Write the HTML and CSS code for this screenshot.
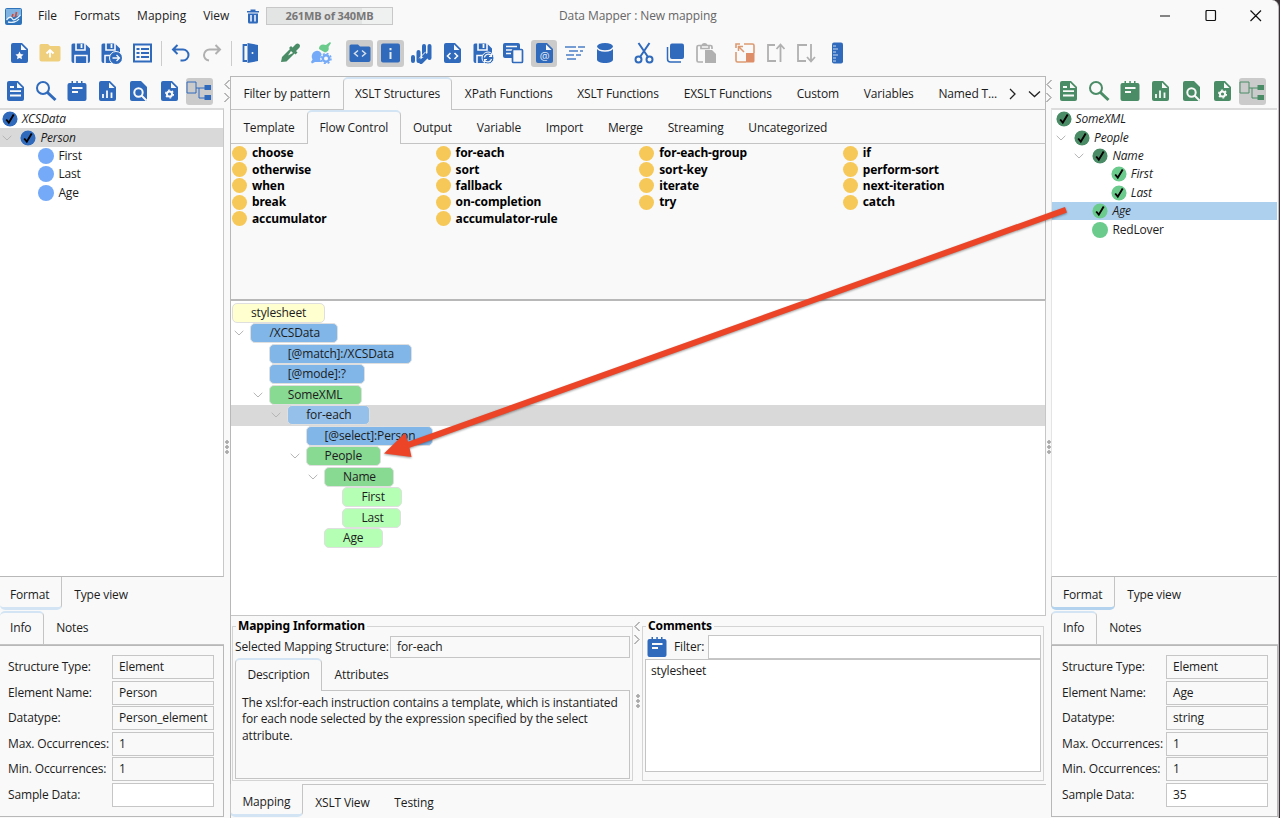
FILE: index.html
```html
<!DOCTYPE html>
<html lang="en">
<head>
    <meta charset="UTF-8">
    <meta name="viewport" content="width=device-width, initial-scale=1.0">
    <title>Data Mapper : New mapping</title>
    <link rel="stylesheet" href="styles.css">
</head>
<body>
    <!-- shared icon shapes, 22x22 grid -->
    <svg class="defs">
        <symbol id="doc" viewBox="0 0 22 22"><path d="M5 1h9l6 6v12a2 2 0 0 1-2 2H5a2 2 0 0 1-2-2V3a2 2 0 0 1 2-2z"/><path d="M13 2.5V8h5.5" fill="#f9f9f9"/></symbol>
        <symbol id="i-text" viewBox="0 0 22 22"><use href="#doc"/><path d="M6 7h4M6 11.2h11M6 15.5h11" stroke="#f9f9f9" stroke-width="1.8"/></symbol>
        <symbol id="i-search" viewBox="0 0 22 22"><circle cx="8" cy="8" r="6" fill="none" stroke="currentColor" stroke-width="2"/><path d="M12.5 12.5l8 7.5" stroke="currentColor" stroke-width="3"/></symbol>
        <symbol id="i-note" viewBox="0 0 22 22"><path d="M3.500 3H5.500V1h1.500v2h3.300V1h1.500v2H15V1h1.500v2h2a2 2 0 0 1 2 2v14a2 2 0 0 1-2 2h-15a2 2 0 0 1-2-2V5a2 2 0 0 1 2-2z"/><path d="M6 8h10.500M6 12h6" stroke="#f9f9f9" stroke-width="1.8"/></symbol>
        <symbol id="i-chart" viewBox="0 0 22 22"><use href="#doc"/><path d="M7 18v-4M11 18V10.500M15.500 18v-5.500" stroke="#f9f9f9" stroke-width="1.8"/></symbol>
        <symbol id="i-find" viewBox="0 0 22 22"><path d="M5 1h9l6 6v12a2 2 0 0 1-2 2H5a2 2 0 0 1-2-2V3a2 2 0 0 1 2-2z"/><circle cx="11.500" cy="12.500" r="4.200" fill="none" stroke="#f9f9f9" stroke-width="2"/><path d="M14.500 15.500l5 5" stroke="#f9f9f9" stroke-width="2"/></symbol>
        <symbol id="i-gear" viewBox="0 0 22 22"><use href="#doc"/><circle cx="11.500" cy="14" r="2.600" fill="none" stroke="#f9f9f9" stroke-width="2"/><circle cx="11.500" cy="14" r="3.900" fill="none" stroke="#f9f9f9" stroke-width="1.300" stroke-dasharray="2 2.080"/></symbol>
        <symbol id="i-tree" viewBox="0 0 26 22"><path d="M1 2h9v11H1zM10 8h9M13 8v10h6" fill="none" stroke="currentColor" stroke-width="1"/><path class="tree-a" d="M18.500 5h6.500v5h-6.500z"/><path class="tree-b" d="M18.500 15h6.500v5h-6.500z"/></symbol>
        <symbol id="i-save" viewBox="0 0 22 22"><path d="M3 1.500h12l5 5V19a2 2 0 0 1-2 2H3.500a2 2 0 0 1-2-2V3a1.500 1.500 0 0 1 1.500-1.500z"/><path d="M6 1v7h9V1M5 21v-7.500h12V21" fill="none" stroke="#f9f9f9" stroke-width="1.600"/><path d="M11.500 2v4" stroke="#f9f9f9" stroke-width="1.800"/></symbol>
        <symbol id="i-check" viewBox="0 0 16 16"><circle cx="8" cy="8" r="7.600"/><path d="M4.200 8.500l2.600 3.200L11.700 3.500" fill="none" stroke="#000" stroke-width="1.900"/></symbol>
        <symbol id="i-down" viewBox="0 0 10 6"><path d="M.7.8L5 5 9.300.8" fill="none" stroke="#b5b5b5"/></symbol>
    </svg>

    <div class="window">
        <header class="titlebar">
            <svg class="logo" viewBox="0 0 17 17"><rect width="17" height="17" rx="2" fill="#2f74bb"/><path d="M1 1h15v6L1 11z" fill="#7fb4e2"/><path d="M1.500 12c3-4 5-3 6-1s4 0 8-4M3 14c4 1 9 0 11-3" fill="none" stroke="#e4f1fb" stroke-width="1.300"/><path d="M11.500 4l-1 5M8 6l-1 3" stroke="#d64532" stroke-width="1.600"/></svg>
            <nav class="menu">
                <a>File</a>
                <a>Formats</a>
                <a>Mapping</a>
                <a>View</a>
            </nav>
            <svg class="trash" viewBox="0 0 12 15"><path d="M0 2h3.500V.5h5V2H12v1.500H0zM1 4.500h10V13a1.500 1.500 0 0 1-1.500 1.500h-7A1.500 1.500 0 0 1 1 13z"/><path d="M4 6v6.500M8 6v6.500" stroke="#f9f9f9" stroke-width="1.500"/></svg>
            <div class="memory">261MB of 340MB</div>
            <div class="title">Data Mapper : New mapping</div>
            <svg class="controls" viewBox="0 0 104 12"><path d="M0 6h10M46 1.500a1 1 0 0 1 1-1h7.500a1 1 0 0 1 1 1v8a1 1 0 0 1-1 1H47a1 1 0 0 1-1-1zM90.500.5l10.500 10.500M101 .5L90.500 11" fill="none" stroke="#111" stroke-width="1.200"/></svg>
        </header>

        <div class="toolbar">
            <i><svg viewBox="0 0 22 22"><use href="#doc"/><path d="M11.500 9.500l1.200 2.500 2.800.4-2 2 .5 2.800-2.500-1.300L9 17.200l.5-2.800-2-2 2.800-.4z" fill="#f9f9f9"/></svg></i>
            <i><svg viewBox="0 0 22 22" fill="#f0cf7c"><path d="M2 2h7l2 2h9a1.500 1.500 0 0 1 1.500 1.500v12A2 2 0 0 1 19.500 19.500h-17A2 2 0 0 1 .5 17.500v-14A1.500 1.500 0 0 1 2 2z"/><path d="M11 15.500V8.500M7.500 11.500L11 8l3.500 3.500" fill="none" stroke="#fff" stroke-width="1.800"/></svg></i>
            <i><svg><use href="#i-save"/></svg></i>
            <i><svg viewBox="0 0 22 22"><use href="#i-save"/><circle cx="16" cy="16" r="6.500" stroke="#f9f9f9"/><path d="M12.500 16h6.500M16.500 13l3 3-3 3" fill="none" stroke="#f9f9f9" stroke-width="1.300"/></svg></i>
            <i><svg viewBox="0 0 22 22"><path d="M3 2.500h17v17H3z" fill="none" stroke="currentColor" stroke-width="2"/><path d="M5.500 7h3M5.500 11h3M5.500 15h3M10 7h8M10 11h8M10 15h8" stroke="currentColor" stroke-width="2.200"/></svg></i>
            <b class="line"></b>
            <i><svg viewBox="0 0 22 22" fill="none" stroke="currentColor" stroke-width="2"><path d="M7.500 3L3 7.500 7.500 12M3 7.500h10a5.500 5.500 0 0 1 0 11h-2.500"/></svg></i>
            <i class="grey"><svg viewBox="0 0 22 22" fill="none" stroke="currentColor" stroke-width="2"><path d="M14.500 3L19 7.500 14.500 12M19 7.500H9a5.500 5.500 0 0 0-6 5.500c0 3 2 5 5 5.500"/></svg></i>
            <b class="line"></b>
            <i><svg viewBox="0 0 22 22"><path d="M7.500 1l10.500 2v16L7.500 21z"/><path d="M7 3H3.500v16H7" fill="none" stroke="currentColor" stroke-width="1.800"/><circle cx="12.500" cy="11" r="1" fill="#f9f9f9"/></svg></i>
            <b></b>
            <i class="green"><svg viewBox="0 0 22 22"><path d="M2 20l1-5 8-8-1-1 2-2 1.500 1.500L17 2a2.500 2.500 0 0 1 3.500 3.500L17 9l1.500 1.500-2 2-1-1-8 8z"/><path d="M12 9l2 2-5 2.500z" fill="#f9f9f9"/></svg></i>
            <i><svg viewBox="0 0 22 22"><path d="M2.500 11.500C5 8 9 8 11 11l3 6-2 3H5l-3 1.500L1 20l1.500-2.500c-1-2-1-4 0-6z" fill="#74aaf7"/><path d="M9 7c0-4 3-5.500 7-4l4-3 1 1-2.500 4c1 3-1 5-3.500 5.500z" fill="#6bcb8d"/><circle cx="16" cy="16.500" r="5.800" fill="#f9f9f9"/><circle cx="16" cy="16.500" r="3.200" fill="#f9f9f9" stroke="#74aaf7" stroke-width="2.400"/><circle cx="16" cy="16.500" r="5" fill="none" stroke="#74aaf7" stroke-width="1.500" stroke-dasharray="2 1.927"/></svg></i>
            <b></b>
            <i class="on"><svg viewBox="0 0 22 22"><path d="M2 2.500h7l2 2h9A1.500 1.500 0 0 1 21.500 6v12a2 2 0 0 1-2 2h-17a2 2 0 0 1-2-2V4A1.500 1.500 0 0 1 2 2.500z"/><path d="M9 8.500l-3.500 3L9 14.500M13 8.500l3.500 3-3.500 3" fill="none" stroke="#d8dfe9" stroke-width="1.500"/></svg></i>
            <i class="on"><svg viewBox="0 0 22 22"><rect x="2" y="1.500" width="19" height="19" rx="2"/><path d="M11.500 6v2.200M11.500 10v7" stroke="#e7ebf1" stroke-width="2"/></svg></i>
            <i><svg viewBox="0 0 22 22" fill="none" stroke="currentColor" stroke-width="4" stroke-linecap="round"><path d="M3 19v-4M8.500 19V10M14 14V4M19.500 16V4M11 20l7-7"/><path d="M10.500 16.500l6-6" stroke="#f9f9f9" stroke-width="1" transform="translate(-1 -.5)"/></svg></i>
            <i><svg viewBox="0 0 22 22"><use href="#doc"/><path d="M9.500 11L6.500 14l3 3M13.500 11l3 3-3 3" fill="none" stroke="#f9f9f9" stroke-width="1.600"/></svg></i>
            <i><svg viewBox="0 0 22 22"><use href="#i-save"/><circle cx="16" cy="16" r="6" stroke="#f9f9f9"/><path d="M12.500 15.500a3.800 3.800 0 0 1 7-1.500M19.500 12v2.500H17M19.500 17a3.800 3.800 0 0 1-7 1M12.500 20v-2.500H15" fill="none" stroke="#f9f9f9" stroke-width="1.200"/></svg></i>
            <i><svg viewBox="0 0 22 22"><rect x="1" y="1" width="17" height="15" rx="2"/><path d="M4 4.500h11M4 8h11M4 11.500h5" stroke="#f9f9f9" stroke-width="1.300"/><rect x="10.500" y="7.500" width="10" height="13" rx="1" fill="#f9f9f9" stroke="currentColor" stroke-width="1.700"/></svg></i>
            <i class="on"><svg viewBox="0 0 22 22"><use href="#doc"/><text x="11.500" y="17.500" class="at">@</text></svg></i>
            <i><svg viewBox="0 0 22 22" fill="none" stroke="#4a7fc6" stroke-width="1.400"><path d="M1 5h11M14 5h7M5 9h9M16 9h3M2 13h8M12 13h5M3 17h9"/></svg></i>
            <i><svg viewBox="0 0 22 22"><path d="M3 5v12.500c0 2 3.500 3.500 8 3.500s8-1.500 8-3.500V5z"/><ellipse cx="11" cy="4.500" rx="8" ry="3.500"/><path d="M3 5.500c1 2.800 4 3.500 8 3.500s7-.7 8-3.500" fill="none" stroke="#f9f9f9" stroke-width="1.300"/></svg></i>
            <b></b>
            <i><svg viewBox="0 0 22 22" fill="none" stroke="currentColor" stroke-width="2"><circle cx="5.500" cy="17.500" r="3"/><circle cx="16.500" cy="17.500" r="3"/><path d="M5.500 1l9.500 14M16.500 1L7 15"/></svg></i>
            <i><svg viewBox="0 0 22 22"><rect x="6" y="1.500" width="14" height="15.500" rx="2"/><path d="M3.500 5v12a3 3 0 0 0 3 3H17" fill="none" stroke="currentColor" stroke-width="1.500"/></svg></i>
            <i class="grey"><svg viewBox="0 0 22 22"><path d="M8 20H3.500A1.500 1.500 0 0 1 2 18.500V5a1.500 1.500 0 0 1 1.500-1.500h12A1.500 1.500 0 0 1 17 5v2M6 3.500v3h8v-3" fill="none" stroke="currentColor" stroke-width="1.700"/><path d="M6.500 4a3 3 0 0 1 6 0" /><path d="M10 8h7l4 4v9H10z"/></svg></i>
            <b></b>
            <i class="orange"><svg viewBox="0 0 22 22"><path d="M10 2H18.500A1.500 1.500 0 0 1 20 3.500V11M2 10v8.500A1.500 1.500 0 0 0 3.500 20H12M2 6V2h4" fill="none" stroke="currentColor" stroke-width="1.600"/><path d="M12 11h8.500v8a1.500 1.500 0 0 1-1.500 1.500h-7z" fill="#de8f69"/><path d="M10 10L4.500 4.500M4.500 9v-4.500h4.500" fill="none" stroke="currentColor" stroke-width="1.500"/></svg></i>
            <i class="grey"><svg viewBox="0 0 22 22" fill="none" stroke="currentColor" stroke-width="1.800"><path d="M10 3H3v16h8M15.500 20V3M11.500 7l4-4.500 4 4.500"/></svg></i>
            <i class="grey"><svg viewBox="0 0 22 22" fill="none" stroke="currentColor" stroke-width="1.800"><path d="M12 3H3v16h8M16 2v17M12 15l4 4.500 4-4.500"/></svg></i>
            <i><svg viewBox="0 0 22 22"><rect x="6" y="0.500" width="11" height="21" rx="2"/><path d="M7 4h3M7 7h5M7 10h3M7 13h5M7 16h3M7 19h3" stroke="#c9daf0" stroke-width="1.200"/></svg></i>
        </div>

        <main class="main">
            <aside class="side">
                <div class="sidebar-tools">
                    <i><svg><use href="#i-text"/></svg></i>
                    <i><svg><use href="#i-search"/></svg></i>
                    <i><svg><use href="#i-note"/></svg></i>
                    <i><svg><use href="#i-chart"/></svg></i>
                    <i><svg><use href="#i-find"/></svg></i>
                    <i><svg><use href="#i-gear"/></svg></i>
                    <i class="on tree-icon"><svg><use href="#i-tree"/></svg></i>
                </div>
                <ul class="tree">
                    <li class="l0 mapped"><svg class="dot"><use href="#i-check"/></svg>XCSData</li>
                    <li class="l1 mapped current"><svg class="exp"><use href="#i-down"/></svg><svg class="dot"><use href="#i-check"/></svg>Person</li>
                    <li class="l2"><span class="dot light"></span>First</li>
                    <li class="l2"><span class="dot light"></span>Last</li>
                    <li class="l2"><span class="dot light"></span>Age</li>
                </ul>
                <div class="tabs bottom"><span class="tab active">Format</span><span class="tab">Type view</span></div>
                <div class="tabs info-tabs"><span class="tab active">Info</span><span class="tab">Notes</span></div>
                <div class="info">
                    <label>Structure Type:</label><div class="field">Element</div>
                    <label>Element Name:</label><div class="field">Person</div>
                    <label>Datatype:</label><div class="field">Person_element</div>
                    <label>Max. Occurrences:</label><div class="field">1</div>
                    <label>Min. Occurrences:</label><div class="field">1</div>
                    <label>Sample Data:</label><div class="field white"></div>
                </div>
            </aside>

            <div class="splitter">
                <svg class="arrows" viewBox="0 0 6 24"><path d="M5.500 1L1 5.500 5.500 10M.5 14L5 18.500.5 23" fill="none" stroke="#777"/></svg>
                <span class="grip"></span>
            </div>

            <section class="center">
                <div class="tabs functions">
                    <span class="tab">Filter by pattern</span>
                    <span class="tab active">XSLT Structures</span>
                    <span class="tab">XPath Functions</span>
                    <span class="tab">XSLT Functions</span>
                    <span class="tab">EXSLT Functions</span>
                    <span class="tab">Custom</span>
                    <span class="tab">Variables</span>
                    <span class="tab">Named T...</span>
                    <svg class="more" viewBox="0 0 32 12"><path d="M1 1l5 5-5 5M20 3.500l5.500 5 5.500-5" fill="none" stroke="#222" stroke-width="1.300"/></svg>
                </div>
                <div class="tabs structures">
                    <span class="tab">Template</span>
                    <span class="tab active">Flow Control</span>
                    <span class="tab">Output</span>
                    <span class="tab">Variable</span>
                    <span class="tab">Import</span>
                    <span class="tab">Merge</span>
                    <span class="tab">Streaming</span>
                    <span class="tab">Uncategorized</span>
                </div>
                <div class="palette">
                    <span>choose</span><span>for-each</span><span>for-each-group</span><span>if</span>
                    <span>otherwise</span><span>sort</span><span>sort-key</span><span>perform-sort</span>
                    <span>when</span><span>fallback</span><span>iterate</span><span>next-iteration</span>
                    <span>break</span><span>on-completion</span><span>try</span><span>catch</span>
                    <span>accumulator</span><span>accumulator-rule</span>
                </div>
                <ul class="mapping">
                    <li class="l0"><span class="node yellow w92">stylesheet</span></li>
                    <li class="l1"><svg class="exp"><use href="#i-down"/></svg><span class="node blue w88">/XCSData</span></li>
                    <li class="l2"><span class="node blue w143">[@match]:/XCSData</span></li>
                    <li class="l2"><span class="node blue w96">[@mode]:?</span></li>
                    <li class="l2"><svg class="exp"><use href="#i-down"/></svg><span class="node dark w92">SomeXML</span></li>
                    <li class="l3 current"><svg class="exp"><use href="#i-down"/></svg><span class="node blue w82">for-each</span></li>
                    <li class="l4"><span class="node blue w127">[@select]:Person</span></li>
                    <li class="l4"><svg class="exp"><use href="#i-down"/></svg><span class="node dark w75">People</span></li>
                    <li class="l5"><svg class="exp"><use href="#i-down"/></svg><span class="node dark w70">Name</span></li>
                    <li class="l6"><span class="node pale w60">First</span></li>
                    <li class="l6"><span class="node pale w59">Last</span></li>
                    <li class="l5"><span class="node pale w59">Age</span></li>
                </ul>
                <div class="details">
                    <div class="group">
                        <div class="legend">Mapping Information</div>
                        <div class="selected"><span>Selected Mapping Structure:</span><div class="field">for-each</div></div>
                        <div class="tabs desc-tabs"><span class="tab active">Description</span><span class="tab">Attributes</span></div>
                        <p class="description">The xsl:for-each instruction contains a template, which is instantiated<br>for each node selected by the expression specified by the select<br>attribute.</p>
                    </div>
                    <div class="splitter small">
                        <svg class="arrows" viewBox="0 0 6 24"><path d="M5.500 1L1 5.500 5.500 10M.5 14L5 18.500.5 23" fill="none" stroke="#777"/></svg>
                        <span class="grip"></span>
                    </div>
                    <div class="group comments">
                        <div class="legend">Comments</div>
                        <div class="filter"><svg><use href="#i-note"/></svg><span>Filter:</span><div class="field white"></div></div>
                        <div class="comment-list">stylesheet</div>
                    </div>
                </div>
                <div class="tabs bottom views"><span class="tab active">Mapping</span><span class="tab">XSLT View</span><span class="tab">Testing</span></div>
            </section>

            <div class="splitter">
                <svg class="arrows" viewBox="0 0 6 24"><path d="M5.500 1L1 5.500 5.500 10M.5 14L5 18.500.5 23" fill="none" stroke="#777"/></svg>
                <span class="grip"></span>
            </div>

            <aside class="side target">
                <div class="sidebar-tools">
                    <i><svg><use href="#i-text"/></svg></i>
                    <i><svg><use href="#i-search"/></svg></i>
                    <i><svg><use href="#i-note"/></svg></i>
                    <i><svg><use href="#i-chart"/></svg></i>
                    <i><svg><use href="#i-find"/></svg></i>
                    <i><svg><use href="#i-gear"/></svg></i>
                    <i class="on tree-icon"><svg><use href="#i-tree"/></svg></i>
                </div>
                <ul class="tree">
                    <li class="l0 mapped"><svg class="dot"><use href="#i-check"/></svg>SomeXML</li>
                    <li class="l1 mapped"><svg class="exp"><use href="#i-down"/></svg><svg class="dot"><use href="#i-check"/></svg>People</li>
                    <li class="l2 mapped"><svg class="exp"><use href="#i-down"/></svg><svg class="dot"><use href="#i-check"/></svg>Name</li>
                    <li class="l3 mapped"><svg class="dot leaf"><use href="#i-check"/></svg>First</li>
                    <li class="l3 mapped"><svg class="dot leaf"><use href="#i-check"/></svg>Last</li>
                    <li class="l2 mapped current"><svg class="dot leaf"><use href="#i-check"/></svg>Age</li>
                    <li class="l2"><span class="dot light"></span>RedLover</li>
                </ul>
                <div class="tabs bottom"><span class="tab active">Format</span><span class="tab">Type view</span></div>
                <div class="tabs info-tabs"><span class="tab active">Info</span><span class="tab">Notes</span></div>
                <div class="info">
                    <label>Structure Type:</label><div class="field">Element</div>
                    <label>Element Name:</label><div class="field">Age</div>
                    <label>Datatype:</label><div class="field">string</div>
                    <label>Max. Occurrences:</label><div class="field">1</div>
                    <label>Min. Occurrences:</label><div class="field">1</div>
                    <label>Sample Data:</label><div class="field white">35</div>
                </div>
            </aside>
        </main>
    </div>

    <!-- drag arrow from Age to People -->
    <svg class="drag" viewBox="0 0 1280 818">
        <path d="M1065 207L1067 212.500 409.500 447.800 411.500 457 384 453.500 405 433 408 441.800z" fill="#eb4427"/>
    </svg>
</body>
</html>
```

FILE: styles.css
```css
* {
    box-sizing: border-box;
}
body {
    margin: 0;
    background: #3a3136;
    font-family: "Open Sans", "Noto Sans", sans-serif;
    font-size: 12px;
    line-height: 16px;
    letter-spacing: -0.15px;
    color: #1c1c1c;
    fill: currentColor;
    overflow: hidden;
}
ul, p {
    margin: 0;
    padding: 0;
    list-style: none;
}
svg {
    display: block;
    flex: none;
}
.defs {
    position: absolute;
    width: 0;
    height: 0;
}
.window {
    width: 1279px;
    height: 818px;
    background: #f9f9f9;
    border-right: 1px solid #bbb;
    border-radius: 0 7px 0 0;
    display: flex;
    flex-direction: column;
}

/* title bar */
.titlebar {
    height: 32px;
    display: flex;
    align-items: center;
    padding-left: 5px;
    flex: none;
}
.logo {
    width: 17px;
    height: 17px;
}
.menu {
    display: flex;
    gap: 17px;
    margin-left: 16px;
    width: 208px;
    letter-spacing: 0;
}
.trash {
    width: 12px;
    height: 15px;
    color: #2f6abc;
    margin-left: 1px;
}
.memory {
    width: 127px;
    height: 18px;
    margin-left: 7px;
    border: 1px solid #c8c8c8;
    background: linear-gradient(90deg, #e3e4e4 76%, #eff0f0 76%);
    color: #777;
    font-weight: bold;
    font-size: 11px;
    text-align: center;
}
.title {
    margin-left: 166px;
    width: 160px;
    color: #666;
    white-space: nowrap;
    letter-spacing: -0.1px;
}
.controls {
    width: 104px;
    height: 12px;
    margin-left: 441px;
}

/* toolbars */
.toolbar, .sidebar-tools {
    display: flex;
    align-items: center;
    color: #2f6abc;
    flex: none;
}
.toolbar {
    height: 42px;
    padding-left: 4px;
    margin-bottom: 2px;
}
.toolbar i, .sidebar-tools i {
    width: 26.700px;
    height: 27px;
    margin: 0 2px;
    display: flex;
    align-items: center;
    justify-content: center;
    flex: none;
}
.toolbar svg, .sidebar-tools svg, .filter svg {
    width: 22px;
    height: 22px;
}
.toolbar b {
    width: 8.400px;
    height: 25px;
}
.toolbar b.line {
    background: linear-gradient(#ccc, #ccc) 4px 0 / 1px 100% no-repeat;
}
.toolbar .on, .sidebar-tools .on {
    background: #cbcbcb;
    border-radius: 3px;
}
.toolbar .grey {
    color: #b0b0b0;
}
.toolbar .green {
    color: #4a8c66;
}
.toolbar .orange {
    color: #dc9a72;
}
.at {
    font-size: 11px;
    font-style: normal;
    text-anchor: middle;
    fill: #e3eaf4;
}
.sidebar-tools {
    height: 30px;
    margin-bottom: 2px;
}
.sidebar-tools .tree-icon svg {
    width: 26px;
}

/* three columns */
.main {
    flex: 1;
    display: grid;
    grid-template-columns: 224px 6px 816px 5px 227px;
    min-height: 0;
}
.side {
    display: flex;
    flex-direction: column;
    min-width: 0;
}
.target .sidebar-tools {
    color: #4a8c66;
    padding-left: 2px;
}
.tree-b {
    fill: currentColor;
}
.target .tree-a {
    fill: #2f6abc;
}
.tree {
    height: 469px;
    background: #fff;
    border-top: 2px solid #dcdcdc;
    border-right: 1px solid #c8c8c8;
    border-bottom: 1px solid #b8b8b8;
}
.target .tree {
    border-left: 1px solid #e4e4e4;
    border-right: 0;
    margin-right: 1px;
}
.tree li {
    height: 18.400px;
    display: flex;
    align-items: center;
    position: relative;
}
.tree .l0 { padding-left: 2px; }
.tree .l1 { padding-left: 20.400px; }
.tree .l2 { padding-left: 38.400px; }
.tree .l3 { padding-left: 57.200px; }
.target .tree .l0 { padding-left: 3.500px; }
.target .tree .l1 { padding-left: 22px; }
.target .tree .l2 { padding-left: 40.400px; }
.target .tree .l3 { padding-left: 58.800px; }
.mapped {
    font-style: italic;
}
.dot {
    width: 16px;
    height: 16px;
    margin-right: 4px;
    color: #2f6abc;
    border-radius: 50%;
}
.dot.light {
    background: #74aaf7;
}
.target .dot {
    color: #4a8c66;
}
.target .dot.leaf {
    color: #6bcb8d;
}
.target .dot.light {
    background: #6bcb8d;
}
.exp {
    width: 10px;
    height: 6px;
    margin-left: -18px;
    margin-right: 8px;
}
.tree .current {
    background: #d9d9d9;
}
.target .tree .current {
    background: #aed0ef;
}

/* tabs */
.tabs {
    display: flex;
    height: 33px;
    flex: none;
    border-bottom: 1px solid #c4c4c4;
}
.tab {
    padding: 0 12.400px;
    line-height: 33px;
    white-space: nowrap;
}
.tab.active {
    height: 33px;
    background: #f9f9f9;
    border: 1px solid #c4c4c4;
    border-top: 2px solid #d3e5f4;
    border-bottom: 0;
    border-radius: 5px 5px 0 0;
    line-height: 30px;
    padding: 0 11.400px;
}
.tabs.bottom {
    border-bottom: 0;
    height: 33px;
}
.bottom .tab {
    line-height: 35px;
}
.bottom .tab.active {
    height: 33px;
    border-top: 0;
    border-bottom: 3px solid #d3e5f4;
    border-radius: 0 0 5px 5px;
}
.target .bottom .tab.active {
    border-bottom-color: #b3d2ee;
}
.side .tabs .tab.active {
    border-left: 0;
    padding-left: 10px;
}
.target .tabs .tab.active {
    border-left: 1px solid #c4c4c4;
    padding-left: 11px;
}

/* info form */
.info-tabs {
    height: 35px;
    padding-top: 1px;
    align-items: flex-end;
}
.info {
    height: 172px;
    border: 1px solid #b8b8b8;
    border-left: 0;
    padding: 9px 9px 0 8px;
    display: grid;
    grid-template-columns: 104px 1fr;
    grid-auto-rows: 25.600px;
    align-items: start;
}
.target .info {
    border-left: 1px solid #b8b8b8;
    padding: 9px 9px 0 10px;
}
.info label {
    line-height: 24px;
    white-space: nowrap;
}
.field {
    height: 24px;
    border: 1px solid #c6c6c6;
    padding-left: 6px;
    line-height: 22px;
    white-space: nowrap;
    overflow: hidden;
}
.field.white {
    background: #fff;
}

/* splitters */
.splitter {
    position: relative;
}
.arrows {
    position: absolute;
    left: 0;
    top: 3px;
    width: 6px;
    height: 24px;
}
.grip {
    position: absolute;
    left: 1px;
    top: 364px;
    width: 4px;
    height: 14px;
    background: radial-gradient(circle at 2px 2px, #aaa 1.500px, transparent 2px) 0 0 / 4px 5px;
}

/* centre */
.center {
    display: flex;
    flex-direction: column;
    min-width: 0;
    border-left: 1px solid #b8b8b8;
}
.functions {
    height: 34px;
    border-top: 1px solid #b8b8b8;
    border-right: 1px solid #b8b8b8;
}
.more {
    width: 32px;
    height: 12px;
    margin: 11px 0 0 auto;
    margin-right: 5px;
}
.structures {
    height: 34px;
    border-right: 1px solid #b8b8b8;
}
.structures .tab {
    line-height: 35px;
}
.structures .tab.active {
    height: 34px;
    line-height: 32px;
}
.palette {
    height: 155px;
    display: grid;
    grid-template-columns: repeat(4, 203.600px);
    grid-auto-rows: 16.400px;
    padding-top: 1px;
    font-family: "Noto Sans", sans-serif;
    font-weight: bold;
    letter-spacing: -0.1px;
    color: #000;
    border-right: 1px solid #b8b8b8;
}
.palette span {
    display: flex;
    align-items: center;
    white-space: nowrap;
}
.palette span::before {
    content: "";
    width: 15px;
    height: 15px;
    margin: 0 5px 0 1px;
    border-radius: 50%;
    background: #f6c858;
}
.mapping {
    height: 317px;
    background: #fff;
    border-top: 2px solid #b8b8b8;
    border-right: 1px solid #c6c6c6;
    border-bottom: 1px solid #c6c6c6;
    padding-top: 1.500px;
}
.mapping li {
    height: 20.500px;
    display: flex;
    align-items: center;
}
.mapping .l0 { padding-left: 1px; }
.mapping .l1 { padding-left: 19.400px; }
.mapping .l2 { padding-left: 37.800px; }
.mapping .l3 { padding-left: 56.200px; }
.mapping .l4 { padding-left: 74.600px; }
.mapping .l5 { padding-left: 93px; }
.mapping .l6 { padding-left: 111.400px; }
.mapping .exp {
    margin-left: -16px;
    margin-right: 6px;
}
.mapping .current {
    background: #d9d9d9;
}
.node {
    height: 20px;
    border: 1px solid #dfdfdf;
    border-radius: 5px;
    padding-left: 18px;
    line-height: 18px;
    white-space: nowrap;
}
.yellow { background: #ffffcf; }
.blue { background: #80b6e8; }
.dark { background: #88d992; }
.pale { background: #b4ffb4; }
.current .blue { background: #94c0e9; }
.w59 { width: 59px; }
.w60 { width: 60px; }
.w70 { width: 70px; }
.w75 { width: 75px; }
.w82 { width: 83px; }
.w88 { width: 88px; }
.w92 { width: 93px; }
.w96 { width: 96px; }
.w127 { width: 127px; }
.w143 { width: 143px; }

/* details under the mapping tree */
.details {
    height: 169px;
    display: grid;
    grid-template-columns: 401px 9px 402px;
    padding: 10px 0 3px 1px;
    border-bottom: 1px solid #c4c4c4;
    flex: none;
}
.group {
    border: 1px solid #d4d4d4;
    padding: 0 2px;
    min-width: 0;
}
.legend {
    width: max-content;
    height: 16px;
    margin: -9px 0 0 1px;
    padding: 0 2px;
    background: #f9f9f9;
    font-family: "Noto Sans", sans-serif;
    font-weight: bold;
    letter-spacing: -0.1px;
    color: #000;
}
.selected, .filter {
    display: flex;
    align-items: center;
}
.selected {
    margin-top: 2px;
}
.selected span {
    width: 155px;
    white-space: nowrap;
}
.selected .field, .filter .field {
    flex: 1;
}
.selected .field {
    height: 22px;
    line-height: 20px;
}
.description {
    height: 88px;
    border: 1px solid #c4c4c4;
    border-top: 0;
    padding: 4px 6px;
    line-height: 16.400px;
    white-space: nowrap;
}
.small .arrows {
    top: -5px;
    left: 1px;
}
.small .grip {
    left: 3px;
    top: 68px;
}
.filter {
    margin-top: 1px;
}
.filter svg {
    color: #2f6abc;
    margin: 0 6px 0 1px;
}
.filter span {
    width: 34px;
}
.comment-list {
    height: 113px;
    background: #fff;
    border: 1px solid #c4c4c4;
    padding: 3px 5px;
}
.views {
    margin-left: -1px;
}
.views .tab.active {
    margin-top: -1px;
    height: 33px;
    line-height: 36px;
    border-left: 1px solid #c4c4c4;
}

/* sits over the whole window */
.drag {
    position: absolute;
    left: 0;
    top: 0;
    width: 1280px;
    height: 818px;
    filter: drop-shadow(0 1px 1px rgba(0, 0, 0, 0.4));
    pointer-events: none;
}
```
